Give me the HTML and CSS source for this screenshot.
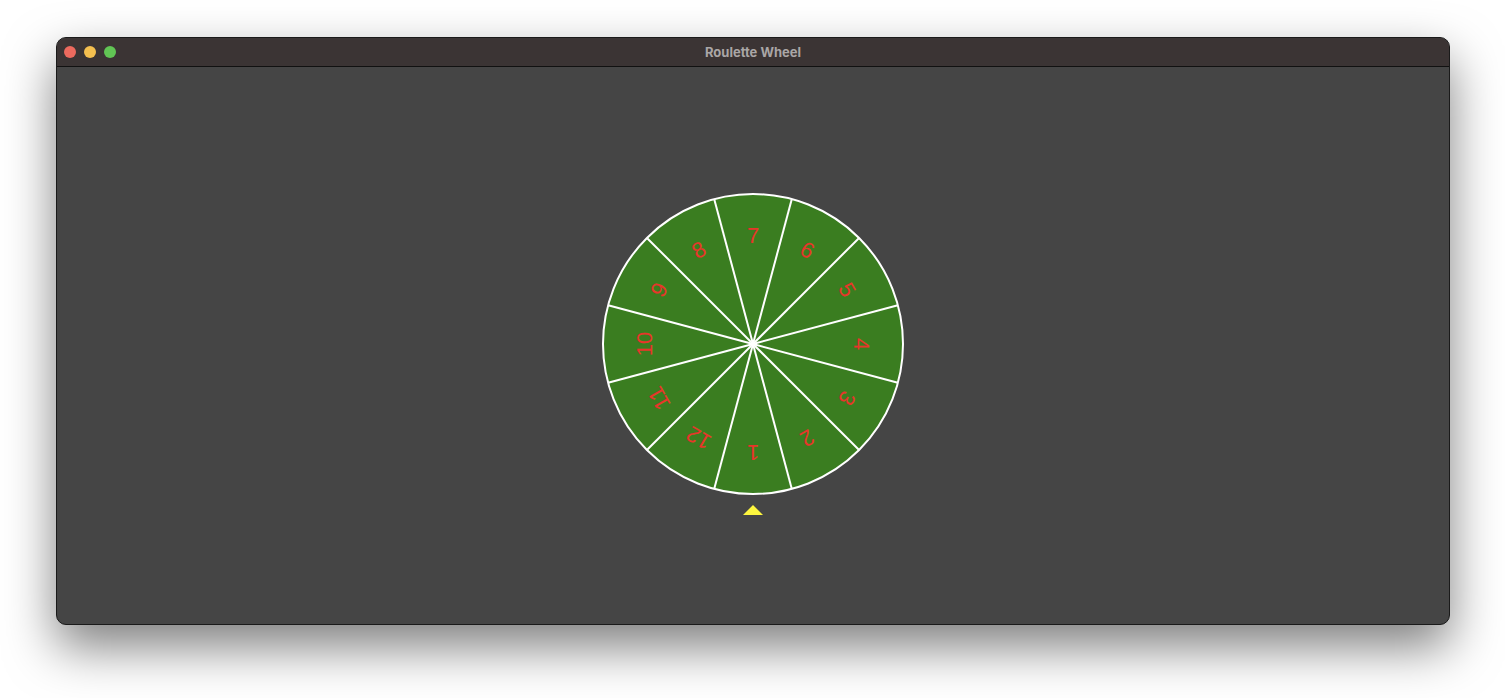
FILE: index.html
```html
<!DOCTYPE html>
<html>
<head>
<meta charset="utf-8">
<title>Roulette Wheel</title>
<link rel="stylesheet" href="styles.css">
</head>
<body>
<div class="window">
  <div class="titlebar">
    <div class="lights">
      <span class="light red"></span>
      <span class="light yellow"></span>
      <span class="light green"></span>
    </div>
    <div class="title">Roulette Wheel</div>
  </div>
  <div class="content">
    <div class="wheel">
      <svg class="wheel-svg" width="304" height="304" viewBox="-152 -152 304 304">
        <circle cx="0" cy="0" r="150" fill="#3a7d20" stroke="#ffffff" stroke-width="2"/>
        <g stroke="#ffffff" stroke-width="2">
          <line x1="0" y1="0" x2="144.89" y2="38.82"/>
          <line x1="0" y1="0" x2="106.07" y2="106.07"/>
          <line x1="0" y1="0" x2="38.82" y2="144.89"/>
          <line x1="0" y1="0" x2="-38.82" y2="144.89"/>
          <line x1="0" y1="0" x2="-106.07" y2="106.07"/>
          <line x1="0" y1="0" x2="-144.89" y2="38.82"/>
          <line x1="0" y1="0" x2="-144.89" y2="-38.82"/>
          <line x1="0" y1="0" x2="-106.07" y2="-106.07"/>
          <line x1="0" y1="0" x2="-38.82" y2="-144.89"/>
          <line x1="0" y1="0" x2="38.82" y2="-144.89"/>
          <line x1="0" y1="0" x2="106.07" y2="-106.07"/>
          <line x1="0" y1="0" x2="144.89" y2="-38.82"/>
        </g>
      </svg>
      <div class="label" style="transform: rotate(180deg)"><span>1</span></div>
      <div class="label" style="transform: rotate(150deg)"><span>2</span></div>
      <div class="label" style="transform: rotate(120deg)"><span>3</span></div>
      <div class="label" style="transform: rotate(90deg)"><span>4</span></div>
      <div class="label" style="transform: rotate(60deg)"><span>5</span></div>
      <div class="label" style="transform: rotate(30deg)"><span>6</span></div>
      <div class="label" style="transform: rotate(0deg)"><span>7</span></div>
      <div class="label" style="transform: rotate(-30deg)"><span>8</span></div>
      <div class="label" style="transform: rotate(-60deg)"><span>9</span></div>
      <div class="label" style="transform: rotate(-90deg)"><span>10</span></div>
      <div class="label" style="transform: rotate(-120deg)"><span>11</span></div>
      <div class="label" style="transform: rotate(-150deg)"><span>12</span></div>
    </div>
    <div class="pointer"></div>
  </div>
</div>
</body>
</html>
```

FILE: styles.css
```css
html, body {
  margin: 0;
  padding: 0;
  background: #ffffff;
}

body {
  padding: 37px 0 0 56px;
  min-height: 698px;
  box-sizing: border-box;
  font-family: "Inter", "Liberation Sans", sans-serif;
}

.window {
  width: 1392px;
  height: 586px;
  border: 1px solid #1a1a1a;
  border-radius: 10px;
  overflow: hidden;
  background: #454545;
  box-shadow: 0 22px 50px rgba(0, 0, 0, 0.5);
  display: flex;
  flex-direction: column;
}

.titlebar {
  height: 28px;
  background: #3b3434;
  border-bottom: 1px solid #111111;
  display: flex;
  align-items: center;
  position: relative;
}

.lights {
  display: flex;
  gap: 8px;
  padding-left: 7px;
}

.light {
  width: 12px;
  height: 12px;
  border-radius: 50%;
  display: block;
}

.light.red { background: #ec6a5e; }
.light.yellow { background: #f4bf4f; }
.light.green { background: #61c554; }

.title {
  position: absolute;
  left: 0;
  right: 0;
  top: 0;
  bottom: 1px;
  display: flex;
  align-items: center;
  justify-content: center;
  color: #aaa6a6;
  font-size: 13px;
  font-weight: 700;
  pointer-events: none;
}

.content {
  flex: 1;
  display: flex;
  flex-direction: column;
  align-items: center;
  padding-top: 125px;
}

.wheel {
  position: relative;
  width: 304px;
  height: 304px;
}

.wheel-svg {
  display: block;
}

.label {
  position: absolute;
  left: 152px;
  top: 152px;
  width: 0;
  height: 0;
  transform-origin: 0 0;
}

.label span {
  position: absolute;
  left: 0;
  top: -108px;
  transform: translate(-50%, -50%);
  font-family: "Liberation Sans", Arial, sans-serif;
  font-size: 22px;
  line-height: 1;
  color: #e8352a;
  white-space: nowrap;
}

.pointer {
  margin-top: 9px;
  width: 0;
  height: 0;
  border-left: 10px solid transparent;
  border-right: 10px solid transparent;
  border-bottom: 10px solid #fdf63f;
}
```
